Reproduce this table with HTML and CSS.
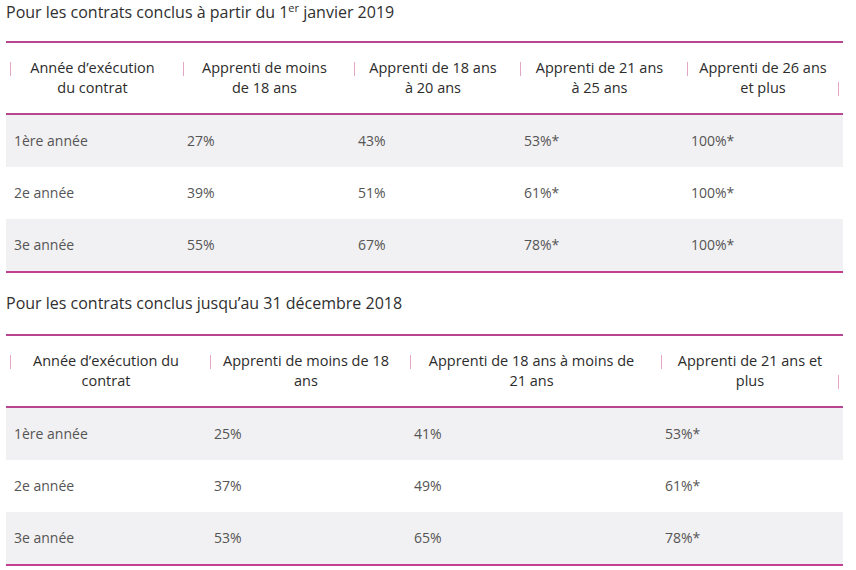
FILE: index.html
```html
<!DOCTYPE html>
<html lang="fr">
<head>
<meta charset="utf-8">
<link rel="stylesheet" href="styles.css">
</head>
<body>
<section class="block">
  <h2 class="title">Pour les contrats conclus à partir du 1<sup>er</sup> janvier 2019</h2>
  <table class="rates">
    <colgroup>
      <col style="width:173px"><col style="width:171px"><col style="width:166px"><col style="width:167px"><col style="width:160px">
    </colgroup>
    <thead>
      <tr>
        <th>Année d’exécution<br>du contrat</th>
        <th>Apprenti de moins<br>de 18 ans</th>
        <th>Apprenti de 18 ans<br>à 20 ans</th>
        <th>Apprenti de 21 ans<br>à 25 ans</th>
        <th class="last">Apprenti de 26 ans<br>et plus</th>
      </tr>
    </thead>
    <tbody>
      <tr><td>1ère année</td><td>27%</td><td>43%</td><td>53%*</td><td>100%*</td></tr>
      <tr><td>2e année</td><td>39%</td><td>51%</td><td>61%*</td><td>100%*</td></tr>
      <tr><td>3e année</td><td>55%</td><td>67%</td><td>78%*</td><td>100%*</td></tr>
    </tbody>
  </table>
</section>
<section class="block second">
  <h2 class="title">Pour les contrats conclus jusqu’au 31 décembre 2018</h2>
  <table class="rates">
    <colgroup>
      <col style="width:200px"><col style="width:200px"><col style="width:251px"><col style="width:186px">
    </colgroup>
    <thead>
      <tr>
        <th>Année d’exécution du<br>contrat</th>
        <th>Apprenti de moins de 18<br>ans</th>
        <th>Apprenti de 18 ans à moins de<br>21 ans</th>
        <th class="last">Apprenti de 21 ans et<br>plus</th>
      </tr>
    </thead>
    <tbody>
      <tr><td>1ère année</td><td>25%</td><td>41%</td><td>53%*</td></tr>
      <tr><td>2e année</td><td>37%</td><td>49%</td><td>61%*</td></tr>
      <tr><td>3e année</td><td>53%</td><td>65%</td><td>78%*</td></tr>
    </tbody>
  </table>
</section>
</body>
</html>
```

FILE: styles.css
```css
html, body {
  margin: 0;
  padding: 0;
  background: #ffffff;
}

body {
  padding-left: 6px;
  font-family: "Open Sans", "Noto Sans", sans-serif;
  color: #333333;
}

.title {
  margin: 0 0 17px 0;
  font-size: 16px;
  font-weight: 400;
  line-height: 24px;
  color: #2f2f2f;
}

.title sup {
  font-size: 11px;
  line-height: 0;
  vertical-align: 6px;
}

.second {
  margin-top: 18px;
}

.second .title {
  margin-bottom: 19px;
}

.rates {
  width: 837px;
  table-layout: fixed;
  border-collapse: collapse;
  border-top: 2px solid #b7458f;
  border-bottom: 2px solid #c2408f;
  font-size: 14px;
}

.rates thead tr {
  border-bottom: 2px solid #b7458f;
}

.rates th {
  position: relative;
  padding: 15px 8px 15px 8px;
  font-size: 14.5px;
  font-weight: 400;
  line-height: 20px;
  text-align: center;
  color: #2c2c2c;
}

.rates th::before {
  content: "";
  position: absolute;
  left: 4px;
  top: 19px;
  width: 1px;
  height: 14px;
  background: #e3a6c6;
}

.rates th.last::after {
  content: "";
  position: absolute;
  right: 4px;
  top: 39px;
  width: 1px;
  height: 14px;
  background: #e3a6c6;
}

.rates td {
  height: 52px;
  padding: 0 8px;
  line-height: 20px;
  color: #555555;
  vertical-align: middle;
}

.rates tbody tr:nth-child(odd) {
  background: #f1f0f2;
}
```
